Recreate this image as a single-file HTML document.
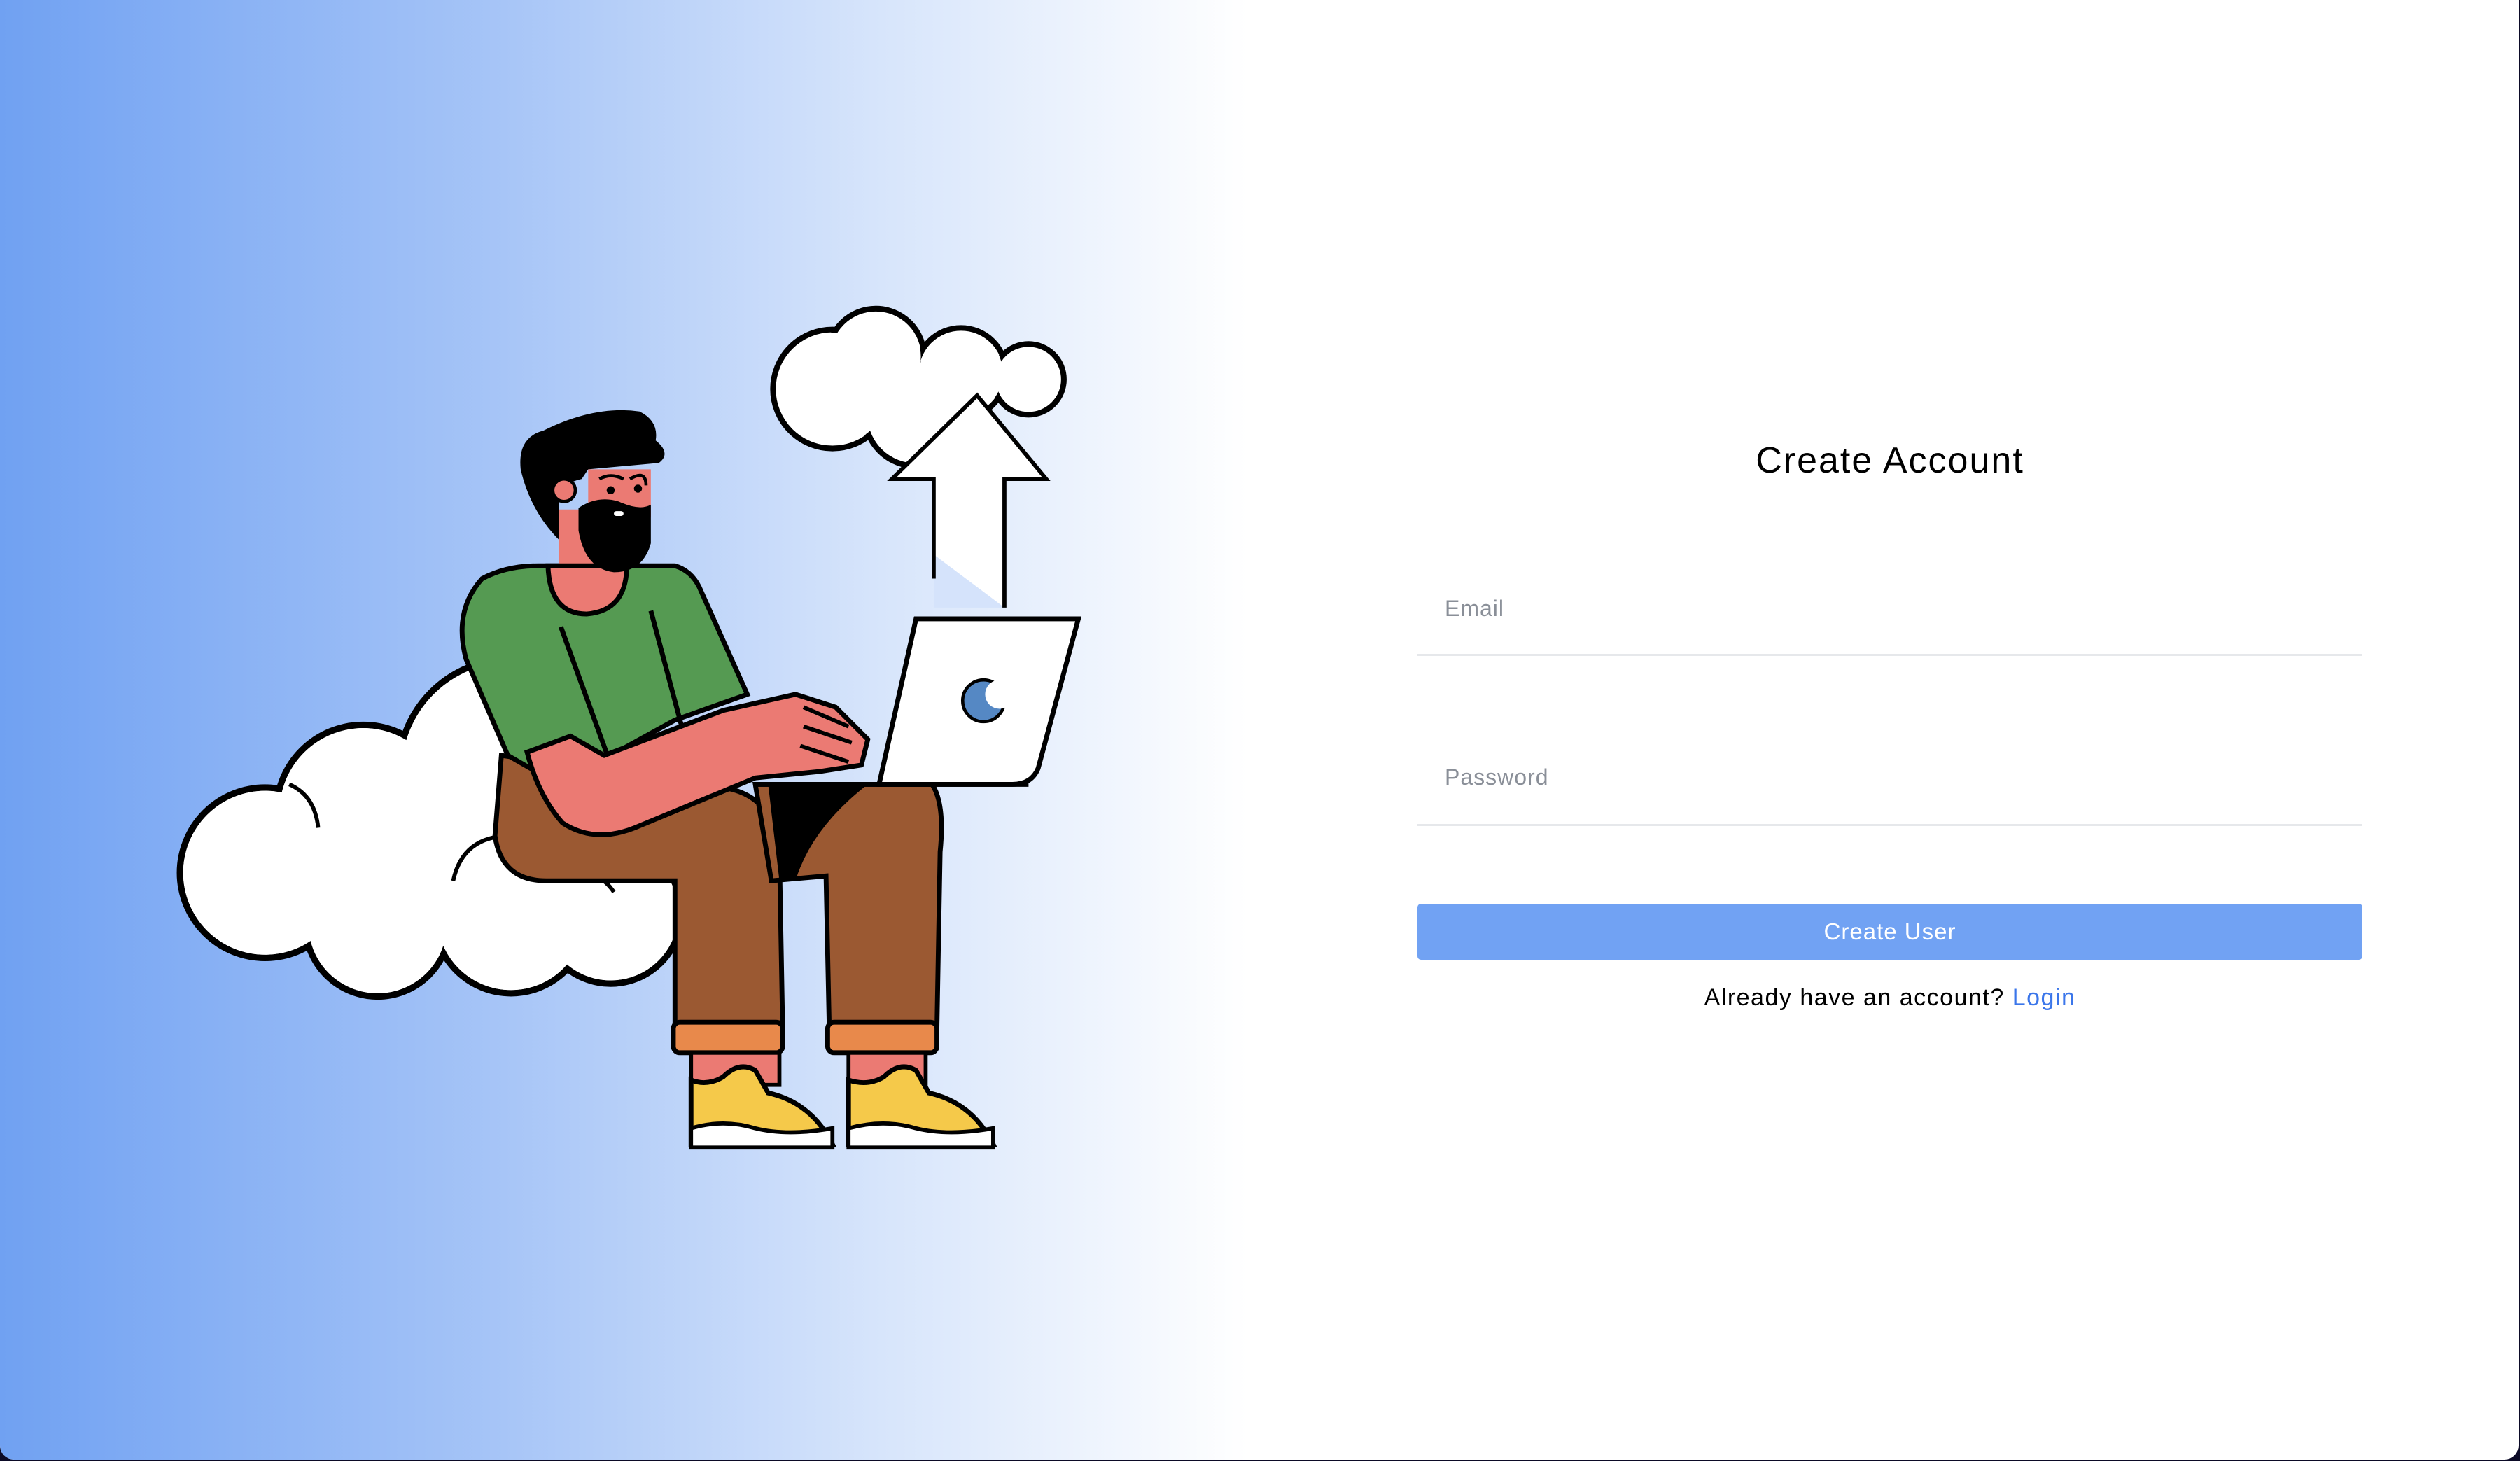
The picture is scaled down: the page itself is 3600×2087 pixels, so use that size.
<!DOCTYPE html>
<html><head><meta charset="utf-8"><style>
html,body{margin:0;padding:0;width:3600px;height:2087px;overflow:hidden;background:#0b0a26;}
#page{position:absolute;left:0;top:0;width:3598px;height:2085px;background:#fff;border-radius:0 0 20px 20px;overflow:hidden;font-family:"Liberation Sans",sans-serif;}
#left{position:absolute;left:0;top:0;width:1800px;height:2087px;background:linear-gradient(90deg,#70a1f2 0%,#a7c5f7 40%,#d7e5fb 70%,#ffffff 99%);}
svg{position:absolute;left:0;top:0;}
.t{position:absolute;white-space:nowrap;}
</style></head><body><div id="page">
<div id="left"></div>
<svg width="3600" height="2087" viewBox="0 0 1568 909" preserveAspectRatio="none">
<g stroke="#000" stroke-width="4" fill="#fff">
<circle cx="165" cy="543" r="53"/><circle cx="226" cy="505" r="54"/><circle cx="318" cy="480" r="70"/>
<circle cx="235" cy="575" r="45"/><circle cx="318" cy="570" r="48"/><circle cx="380" cy="568" r="44"/>
</g>
<g fill="#fff">
<circle cx="165" cy="543" r="51"/><circle cx="226" cy="505" r="52"/><circle cx="318" cy="480" r="68"/>
<circle cx="235" cy="575" r="43"/><circle cx="318" cy="570" r="46"/><circle cx="380" cy="568" r="42"/>
<circle cx="272" cy="545" r="35"/>
</g>
<path d="M198,515 Q196,495 180,488 M282,548 Q288,520 318,520 Q345,520 355,545 Q372,540 382,555" stroke="#000" stroke-width="2.5" fill="none"/>
<g stroke="#000" stroke-width="3.5" fill="#fff">
<circle cx="518" cy="242" r="37"/><circle cx="545" cy="222" r="30"/><circle cx="598" cy="232" r="28"/><circle cx="640" cy="236" r="22"/><circle cx="570" cy="258" r="32"/>
</g>
<g fill="#fff">
<circle cx="518" cy="242" r="35"/><circle cx="545" cy="222" r="28"/><circle cx="598" cy="232" r="26"/><circle cx="640" cy="236" r="20"/><circle cx="570" cy="258" r="30"/>
</g>
<path d="M555,298 L608,246 L651,298 L625,298 L625,378 L581,345 L581,298 Z" fill="#fff"/>
<path d="M581,345 L625,378 L581,378Z" fill="#d5e3fb"/>
<path d="M581,360 L581,298 L555,298 L608,246 L651,298 L625,298 L625,378" fill="none" stroke="#000" stroke-width="2.5"/>
<!-- legs -->
<path d="M312,470 L308,520 Q312,548 340,548 L420,548 L420,640 L487,640 L485,530 Q482,495 450,490 Z" fill="#9b5932" stroke="#000" stroke-width="3"/>
<path d="M470,488 L580,488 Q588,500 585,530 L583,640 L516,640 L514,545 L480,548 Z" fill="#9b5932" stroke="#000" stroke-width="3"/>
<path d="M478,488 L540,488 Q505,515 495,548 L485,548 Z" fill="#000"/>
<rect x="419" y="636" width="68" height="19" rx="4" fill="#e8894b" stroke="#000" stroke-width="3"/>
<rect x="515" y="636" width="68" height="19" rx="4" fill="#e8894b" stroke="#000" stroke-width="3"/>
<rect x="430" y="655" width="55" height="20" fill="#eb7a73" stroke="#000" stroke-width="2.5"/>
<rect x="528" y="655" width="48" height="20" fill="#eb7a73" stroke="#000" stroke-width="2.5"/>
<path d="M430,672 Q440,676 450,670 Q460,660 470,666 L478,680 Q505,686 518,712 L430,712 Z" fill="#f5c94a" stroke="#000" stroke-width="3"/>
<path d="M528,672 Q540,676 550,670 Q560,660 570,666 L578,680 Q605,686 618,712 L528,712 Z" fill="#f5c94a" stroke="#000" stroke-width="3"/>
<path d="M430,702 Q450,696 470,702 Q490,707 518,702 L518,714 L430,714Z" fill="#fff" stroke="#000" stroke-width="2.5"/>
<path d="M528,702 Q550,696 570,702 Q590,707 618,702 L618,714 L528,714Z" fill="#fff" stroke="#000" stroke-width="2.5"/>
<!-- torso -->
<path d="M300,360 Q315,352 335,352 L420,352 Q430,355 435,365 L465,432 L420,448 L380,470 L330,478 L316,470 L290,410 Q282,380 300,360Z" fill="#559a52" stroke="#000" stroke-width="3"/>
<path d="M349,390 L378,470 M405,380 L425,455" stroke="#000" stroke-width="3" fill="none"/>
<!-- arm -->
<path d="M328,468 L355,458 L376,470 L450,442 L495,432 L520,440 L540,460 L536,476 L510,480 L470,484 L395,515 Q370,525 350,512 Q335,495 328,468Z" fill="#eb7a73" stroke="#000" stroke-width="3"/>
<path d="M500,440 L528,452 M500,452 L530,462 M498,464 L528,474" stroke="#000" stroke-width="2.5"/>
<!-- neck & head -->
<path d="M348,317 L379,317 L382,355 L348,355Z" fill="#eb7a73"/>
<path d="M341,352 Q342,382 365,382 Q390,380 390,352Z" fill="#eb7a73" stroke="#000" stroke-width="3"/>
<path d="M366,292 L405,292 L405,322 L366,322Z" fill="#eb7a73"/>
<path d="M324,292 Q322,272 338,268 Q370,252 398,256 Q410,262 408,274 Q418,282 410,288 L366,292 L362,298 Q352,300 348,308 L348,336 Q330,318 324,292Z" fill="#000"/>
<circle cx="351" cy="305" r="7" fill="#eb7a73" stroke="#000" stroke-width="2"/>
<path d="M360,316 Q372,308 385,312 Q398,318 405,314 L405,338 Q400,356 382,356 Q364,354 360,330Z" fill="#000"/>
<circle cx="380" cy="305" r="2.5" fill="#000"/><circle cx="397" cy="304" r="2.5" fill="#000"/>
<path d="M373,298 Q380,294 388,298 M392,298 Q402,292 402,302" stroke="#000" stroke-width="2" fill="none"/>
<rect x="382" y="318" width="6" height="3" rx="1.5" fill="#fff"/>
<!-- laptop -->
<path d="M570,385 L671,385 L646,478 Q642,488 630,488 L547,488 Z" fill="#fff" stroke="#000" stroke-width="3"/>
<path d="M470,488 L640,488" stroke="#000" stroke-width="3"/>
<circle cx="612" cy="436" r="13" fill="#5588c4" stroke="#000" stroke-width="2"/>
<circle cx="622" cy="432" r="9" fill="#fff"/>
</svg>
<div class="t" style="left:2025px;width:1350px;text-align:center;top:628px;font-size:52px;letter-spacing:2px;color:#000;">Create Account</div>
<div class="t" style="left:2064px;top:851px;font-size:32px;letter-spacing:1px;color:#8a8f98;">Email</div>
<div style="position:absolute;left:2025px;top:934px;width:1350px;height:3px;background:#e6e8eb;"></div>
<div class="t" style="left:2064px;top:1092px;font-size:32px;letter-spacing:1px;color:#8a8f98;">Password</div>
<div style="position:absolute;left:2025px;top:1177px;width:1350px;height:3px;background:#e6e8eb;"></div>
<div style="position:absolute;left:2025px;top:1291px;width:1350px;height:80px;background:#71a2f3;border-radius:5px;color:#fff;font-size:33px;letter-spacing:1px;text-align:center;line-height:80px;">Create User</div>
<div class="t" style="left:2025px;width:1350px;text-align:center;top:1406px;font-size:34px;letter-spacing:1.5px;color:#000;">Already have an account? <span style="color:#3b76ea;">Login</span></div>
</div></body></html>
